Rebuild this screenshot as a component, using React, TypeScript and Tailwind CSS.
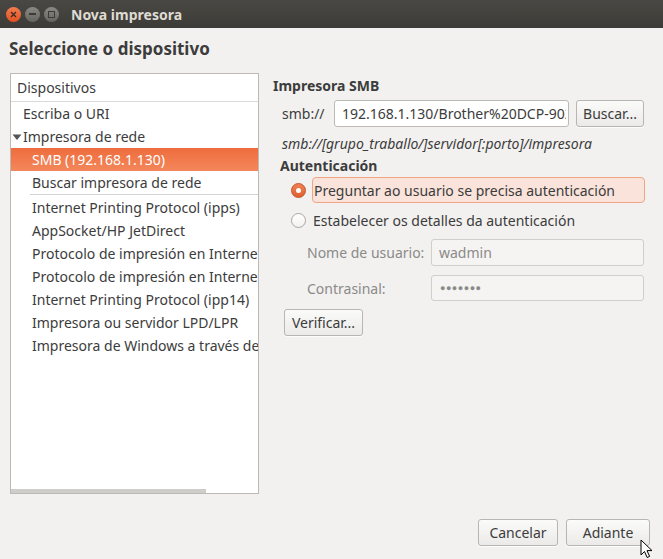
import React from "react";

const font = { fontFamily: '"Noto Sans", "Open Sans", sans-serif' };

function Btn({ children, w }: { children: React.ReactNode; w: string }) {
  return (
    <div
      className={`${w} h-[27px] flex items-center justify-center rounded-[3px] border border-[#b9b6b1] bg-gradient-to-b from-[#fbfbfa] to-[#ebeae8] text-[14px] text-[#3c3c3c] shadow-[0_1px_0_rgba(255,255,255,0.8)]`}
    >
      {children}
    </div>
  );
}

function Row({
  children,
  indent,
  selected,
}: {
  children: React.ReactNode;
  indent: string;
  selected?: boolean;
}) {
  return (
    <div
      className={`h-[23px] flex items-center whitespace-nowrap overflow-hidden ${indent} ${
        selected
          ? "bg-gradient-to-b from-[#ee6c3c] to-[#f3875b] text-white"
          : "text-[#3c3c3c]"
      }`}
    >
      {children}
    </div>
  );
}

export default function App() {
  return (
    <div
      className="relative w-[663px] h-[559px] bg-[#f2f1f0] flex flex-col overflow-hidden text-[14px] text-[#3c3c3c]"
      style={font}
    >
      {/* Title bar */}
      <div className="h-[28px] flex items-center bg-gradient-to-b from-[#494843] to-[#3c3b37] shrink-0">
        <div className="ml-[6px] w-[15px] h-[15px] rounded-full bg-gradient-to-b from-[#f37b4e] to-[#e2521d] flex items-center justify-center">
          <svg width="7" height="7" viewBox="0 0 7 7">
            <path d="M1 1 L6 6 M6 1 L1 6" stroke="#3c2a22" strokeWidth="1.3" />
          </svg>
        </div>
        <div className="ml-[4px] w-[15px] h-[15px] rounded-full bg-gradient-to-b from-[#8a8984] to-[#65645f] flex items-center justify-center">
          <div className="w-[7px] h-[1.5px] bg-[#3c3b37]" />
        </div>
        <div className="ml-[4px] w-[15px] h-[15px] rounded-full bg-gradient-to-b from-[#8a8984] to-[#65645f] flex items-center justify-center">
          <div className="w-[7px] h-[7px] border border-[#3c3b37]" />
        </div>
        <div className="ml-[12px] text-[14px] font-bold text-[#dfdbd2]">Nova impresora</div>
      </div>

      {/* Heading */}
      <div className="pl-[9px] pt-[10px] h-[45px] text-[17px] font-bold leading-[22px] text-[#3c3c3c]">
        Seleccione o dispositivo
      </div>

      <div className="flex">
        {/* Left panel */}
        <div className="ml-[10px] w-[249px] h-[421px] border border-[#bdbab5] bg-white flex flex-col relative">
          <div className="h-[28px] flex items-center pl-[6px] border-b border-[#dcdad6] text-[#3c3c3c]">
            Dispositivos
          </div>
          <Row indent="pl-[12px]">Escriba o URI</Row>
          <Row indent="pl-0">
            <svg width="12" height="10" viewBox="0 0 12 10" className="mr-0">
              <path d="M1.5 2.5 L10.5 2.5 L6 8 Z" fill="#555" />
            </svg>
            Impresora de rede
          </Row>
          <Row indent="pl-[21px]" selected>
            SMB (192.168.1.130)
          </Row>
          <Row indent="pl-[21px]">Buscar impresora de rede</Row>
          <div className="h-[2px] flex">
            <div className="ml-[19px] flex-1 h-[1px] bg-[#d6d4d0]" />
          </div>
          <Row indent="pl-[21px]">Internet Printing Protocol (ipps)</Row>
          <Row indent="pl-[21px]">AppSocket/HP JetDirect</Row>
          <Row indent="pl-[21px]">Protocolo de impresión en Internet (http)</Row>
          <Row indent="pl-[21px]">Protocolo de impresión en Internet (ipp)</Row>
          <Row indent="pl-[21px]">Internet Printing Protocol (ipp14)</Row>
          <Row indent="pl-[21px]">Impresora ou servidor LPD/LPR</Row>
          <Row indent="pl-[21px]">Impresora de Windows a través de SAMBA</Row>
          <div className="flex-1" />
          <div className="h-[4px] w-[195px] bg-[#cfcdca]" />
        </div>

        {/* Right form */}
        <div className="ml-[14px] flex flex-col w-[380px]">
          <div className="h-[24px] flex items-center font-bold mt-0">Impresora SMB</div>
          <div className="flex items-center mt-[3px] h-[27px]">
            <div className="ml-[9px] w-[52px]">smb://</div>
            <div className="w-[235px] h-[27px] rounded-[3px] border border-[#bdbab5] bg-white pl-[7px] pr-[2px] flex items-center">
              <div className="w-full overflow-hidden whitespace-nowrap">
                192.168.1.130/Brother%20DCP-9020CDW
              </div>
            </div>
            <div className="ml-[7px]">
              <Btn w="w-[68px]">Buscar...</Btn>
            </div>
          </div>
          <div className="ml-[9px] h-[22px] mt-[5px] flex items-center italic">
            smb://[grupo_traballo/]servidor[:porto]/impresora
          </div>
          <div className="ml-[7px] h-[23px] flex items-center font-bold">Autenticación</div>
          <div className="flex items-center mt-0 h-[26px]">
            <div className="ml-[18px] w-[15px] h-[15px] rounded-full bg-gradient-to-b from-[#f08155] to-[#df5f2e] border border-[#c4532a] flex items-center justify-center">
              <div className="w-[5px] h-[5px] rounded-full bg-white" />
            </div>
            <div className="ml-[6px] w-[333px] h-[26px] rounded-[4px] border border-[#f1a583] bg-[#f9e3da] flex items-center pl-[1px]">
              Preguntar ao usuario se precisa autenticación
            </div>
          </div>
          <div className="flex items-center mt-[4px] h-[26px]">
            <div className="ml-[18px] w-[15px] h-[15px] rounded-full bg-gradient-to-b from-white to-[#f2f1f0] border border-[#a9a6a1]" />
            <div className="ml-[7px]">Estabelecer os detalles da autenticación</div>
          </div>
          <div className="flex items-center mt-[6px] h-[27px]">
            <div className="ml-[34px] w-[124px] text-[#8b8a87]">Nome de usuario:</div>
            <div className="w-[213px] h-[27px] rounded-[3px] border border-[#d0cecb] bg-[#f5f4f3] flex items-center pl-[7px] text-[#8b8a87]">
              wadmin
            </div>
          </div>
          <div className="flex items-center mt-[9px] h-[26px]">
            <div className="ml-[34px] w-[124px] text-[#8b8a87]">Contrasinal:</div>
            <div className="w-[213px] h-[26px] rounded-[3px] border border-[#d0cecb] bg-[#f5f4f3] flex items-center pl-[8px] text-[#8b8a87] text-[9px] tracking-[0.5px]">
              ●●●●●●●
            </div>
          </div>
          <div className="mt-[8px] ml-[11px]">
            <Btn w="w-[79px]">Verificar...</Btn>
          </div>
        </div>
      </div>

      {/* Bottom buttons */}
      <div className="flex justify-end mt-[25px] pr-[13px] gap-[8px]">
        <Btn w="w-[80px]">Cancelar</Btn>
        <Btn w="w-[84px]">Adiante</Btn>
      </div>

      {/* Mouse cursor */}
      <svg
        className="absolute left-[640px] top-[539px]"
        width="14"
        height="21"
        viewBox="0 0 14 21"
      >
        <path
          d="M1 1 L1 16 L4.5 12.5 L7.2 18.5 L9.6 17.4 L7 11.6 L12 11.6 Z"
          fill="white"
          stroke="black"
          strokeWidth="1"
          strokeLinejoin="round"
        />
      </svg>
    </div>
  );
}
